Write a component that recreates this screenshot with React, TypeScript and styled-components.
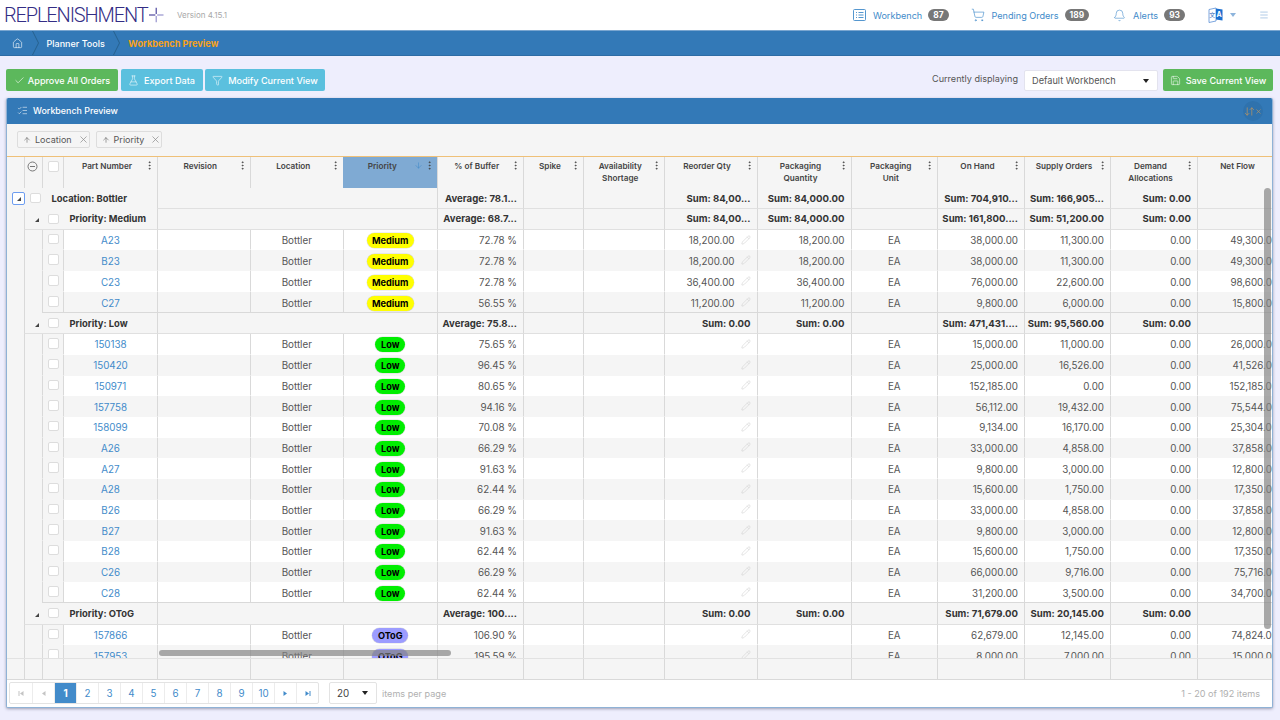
import React from "react";
import styled, { createGlobalStyle, css } from "styled-components";
import {
  Home, Check, Filter, FlaskConical, ListChecks, Save, Pencil, EllipsisVertical, ArrowDownUp, ArrowDown, ArrowUp, X,
  ShoppingCart, Bell, Menu,
} from "lucide-react";

const Global = createGlobalStyle`
  html, body { margin: 0; padding: 0; height: 720px; overflow: hidden; background: #eeeefd; }
  body { font-family: Inter, "Liberation Sans", sans-serif; font-size: 9.8px; color: #4a4a4a; }
  * { box-sizing: border-box; }
`;

const LINE = "#d9d9d9";
const BLUE = "#3379b7";
const LINK = "#428bca";
const template = "17px 18px 21px 94px 92.5px 93.5px 93.5px 86.5px 60px 80.5px 93px 94px 86.5px 87px 86px 87px 87px";

const Page = styled.div`
  width: 1280px;
  height: 720px;
  display: flex;
  flex-direction: column;
`;
const TopBar = styled.header`
  height: 30px;
  background: #fff;
  display: flex;
  align-items: center;
  padding: 0 11px 0 4px;
`;
const Logo = styled.div`
  width: 160px;
  display: flex;
  align-items: center;
  gap: 2px;
  color: #332d85;
`;
const LogoText = styled.span`
  font-family: Roboto, sans-serif;
  font-weight: 300;
  font-size: 20px;
  letter-spacing: -1.15px;
  line-height: 30px;
`;
const Version = styled.span`
  margin-left: 13px;
  color: #a8a8a8;
  font-size: 8px;
`;
const Spacer = styled.div`
  flex: 1;
`;
const NavItem = styled.div<{ $gap: number }>`
  display: flex;
  align-items: center;
  color: ${LINK};
  font-size: 9.1px;
  margin-right: ${(p) => p.$gap}px;
  svg { flex: none; }
`;
const NavLabel = styled.span`
  margin: 0 6px 0 7px;
`;
const Badge = styled.span`
  background: #777;
  color: #fff;
  font-weight: 700;
  font-size: 8.4px;
  line-height: 12px;
  border-radius: 7px;
  padding: 0 5px;
`;
const Caret = styled.span`
  margin: 0 23px 0 6px;
  width: 0;
  height: 0;
  border-left: 3px solid transparent;
  border-right: 3px solid transparent;
  border-top: 4px solid #8db4dc;
`;
const Crumbs = styled.nav`
  height: 26px;
  background: ${BLUE};
  border-top: 1px solid #7aa6d0;
  border-bottom: 1px solid #2d6ca5;
  display: flex;
  align-items: center;
  padding-left: 12px;
  color: #fff;
  font-size: 9px;
  font-weight: 500;
`;
const CrumbSep = styled.svg`
  margin: 0 8px 0 8.5px;
  flex: none;
`;
const CrumbCurrent = styled.span`
  color: #f7a11a;
  font-size: 9.2px;
  font-weight: 700;
`;
const Toolbar = styled.div`
  height: 42px;
  padding: 13px 7px 0 6px;
  display: flex;
  align-items: flex-start;
`;
const Btn = styled.button<{ $kind: "green" | "cyan"; $w: number; $gap?: number }>`
  width: ${(p) => p.$w}px;
  height: 22px;
  border: 0;
  border-radius: 2px;
  padding: 0;
  color: #fff;
  font: 500 9.1px Inter, sans-serif;
  display: flex;
  align-items: center;
  justify-content: center;
  gap: ${(p) => p.$gap ?? 5}px;
  background: ${(p) => (p.$kind === "green" ? "#5cb85c" : "#5bc0de")};
  & + & { margin-left: 2.5px; }
`;
const ShowLabel = styled.span`
  margin: 4px 6px 0 0;
  font-size: 9.1px;
  color: #555;
`;
const Select = styled.div`
  width: 134px;
  height: 21px;
  margin: 1px 5px 0 0;
  background: #fff;
  border: 1px solid #e3e3ee;
  border-radius: 2px;
  display: flex;
  align-items: center;
  justify-content: space-between;
  padding: 0 8px 0 7px;
  font-size: 9.2px;
  color: #555;
`;
const SelCaret = styled.span`
  width: 0;
  height: 0;
  border-left: 3px solid transparent;
  border-right: 3px solid transparent;
  border-top: 4px solid #222;
`;
const Panel = styled.section`
  height: 610px;
  margin: 0 7px 0 6px;
  background: #f5f5f5;
  border: 1px solid #8fb2d6;
  border-top: 0;
  border-radius: 2px;
  box-shadow: 0 1px 3px rgba(60, 60, 90, 0.45);
  display: flex;
  flex-direction: column;
  position: relative;
  overflow: hidden;
`;
const PanelHead = styled.div`
  height: 26px;
  flex: none;
  background: ${BLUE};
  color: #fff;
  display: flex;
  align-items: center;
  padding: 0 9px 1px 10px;
  gap: 5px;
  font-size: 8.9px;
  font-weight: 500;
`;
const SortClear = styled.div`
  width: 20px;
  height: 20px;
  border-radius: 50%;
  background: #2f72ad;
  color: #c9995a;
  display: flex;
  align-items: center;
  justify-content: center;
  padding-top: 1px;
`;
const Chips = styled.div`
  height: 33px;
  flex: none;
  display: flex;
  align-items: center;
  padding: 0 0 1px 10px;
  gap: 6px;
  border-bottom: 1.5px solid #efc078;
`;
const Chip = styled.div`
  height: 17.5px;
  border: 1px solid #ddd;
  border-radius: 2px;
  padding: 0 0 0 5px;
  display: flex;
  align-items: center;
  color: #555;
  font-size: 9px;
  gap: 4px;
  & > svg:last-child { margin-left: 2px; }
`;
const HeadRow = styled.div`
  height: 31px;
  flex: none;
  display: grid;
  grid-template-columns: ${template};
`;
const HeadCell = styled.div<{ $on?: boolean; $line?: boolean }>`
  position: relative;
  padding: 4px ${(p) => (p.$on ? 18 : 9)}px 0 2px;
  text-align: center;
  font-size: 8.2px;
  font-weight: 600;
  line-height: 11.5px;
  color: #444;
  white-space: pre-line;
  ${(p) => p.$line !== false && css`border-left: 1px solid ${LINE};`}
  ${(p) => p.$on && css`background: #7faad3; border-left-color: #7faad3;`}
`;
const TickCell = styled(HeadCell)`
  padding: 4px 0 0 5px;
`;
const Kebab = styled.span`
  position: absolute;
  right: 2px;
  top: 3px;
  color: #444;
  display: flex;
`;
const SortArrow = styled.span`
  position: absolute;
  right: 14px;
  top: 4px;
  color: ${LINK};
  display: flex;
`;
const Body = styled.div`
  height: 469.5px;
  flex: none;
  overflow: hidden;
`;
const Row = styled.div<{ $alt?: boolean; $last?: boolean; $h: number }>`
  height: ${(p) => p.$h}px;
  display: grid;
  grid-template-columns: ${template};
  --row: ${(p) => (p.$alt ? "#f5f5f5" : "#fff")};
  --bb: ${(p) => (p.$last ? LINE : "transparent")};
`;
const Cell = styled.div<{ $align?: string }>`
  border-left: 1px solid ${LINE};
  border-bottom: 1px solid var(--bb);
  background: var(--row);
  padding: 2px 6px 0;
  display: flex;
  align-items: center;
  overflow: hidden;
  white-space: nowrap;
  min-width: 0;
  color: #555;
  justify-content: ${(p) => p.$align || "flex-end"};
`;
const Blank = styled.div`
  grid-column: span 1;
`;
const Gutter = styled.div`
  border-left: 1px solid ${LINE};
`;
const BoxCell = styled.div`
  border-left: 1px solid ${LINE};
  border-bottom: 1px solid var(--bb);
  padding: 4px 0 0 5px;
`;
const Box = styled.span`
  display: block;
  width: 10.5px;
  height: 10.5px;
  background: #fff;
  border: 1px solid #ddd;
  border-radius: 2px;
  flex: none;
`;
const GroupBox = styled(Box)<{ $level: number }>`
  margin-left: ${(p) => (p.$level === 0 ? 5 : 6)}px;
`;
const PartLink = styled.span`
  color: ${LINK};
`;
const PencilMark = styled.span`
  color: #cfcfcf;
  margin-left: 6px;
  margin-top: -2px;
  display: flex;
`;
const Pill = styled.span<{ $p: string }>`
  font-size: 9.2px;
  font-weight: 700;
  color: #000;
  line-height: 15px;
  padding: 0 5.5px;
  border-radius: 8px;
  background: ${(p) => (p.$p === "Medium" ? "#ffff00" : p.$p === "Low" ? "#00ee00" : "#9c9cff")};
  box-shadow: 0 0 0 0.5px rgba(0, 0, 0, 0.12);
`;
const GroupLabel = styled.div<{ $level: number }>`
  grid-column: span ${(p) => (p.$level === 0 ? 4 : 3)};
  display: flex;
  align-items: center;
  font-size: 9.4px;
  font-weight: 700;
  color: #333;
  border-bottom: 1.5px solid #e0e0e0;
  ${(p) =>
    p.$level === 0
      ? css`padding-left: 5px; border-bottom-color: transparent;`
      : css`padding-left: 4px; border-left: 1px solid ${LINE};`}
`;
const Expander = styled.span<{ $focus?: boolean }>`
  width: 13px;
  height: 13px;
  flex: none;
  position: relative;
  ${(p) => p.$focus && css`border: 1.5px solid #6d9df0; border-radius: 2px; background: #fff;`}
  &::after {
    content: "";
    position: absolute;
    right: 3px;
    bottom: 3px;
    border-left: 4px solid transparent;
    border-bottom: 4px solid #444;
  }
`;
const GroupName = styled.span`
  margin-left: 11px;
`;
const GroupEmpty = styled.div`
  grid-column: span 3;
  border-left: 1px solid ${LINE};
  border-bottom: 1.5px solid #e0e0e0;
`;
const Sum = styled.div`
  border-left: 1px solid ${LINE};
  border-bottom: 1.5px solid #e0e0e0;
  padding: 0 6px 0 0;
  display: flex;
  align-items: center;
  justify-content: flex-end;
  font-size: 9.6px;
  font-weight: 700;
  color: #333;
  white-space: nowrap;
  overflow: hidden;
`;
const Foot = styled.div`
  height: 22px;
  flex: none;
  display: grid;
  grid-template-columns: ${template};
  border-top: 1.5px solid #e2e2e2;
  border-bottom: 1px solid ${LINE};
`;
const Pager = styled.div`
  flex: 1;
  background: #fff;
  display: flex;
  align-items: center;
  padding: 0 12px 0 2px;
`;
const PageGroup = styled.div`
  display: flex;
  border: 1px solid #e3e3e3;
  border-radius: 2px;
  height: 22px;
`;
const PageCell = styled.span<{ $on?: boolean; $off?: boolean }>`
  width: 22px;
  display: flex;
  align-items: center;
  justify-content: center;
  color: ${(p) => (p.$on ? "#fff" : p.$off ? "#c4c4c4" : LINK)};
  background: ${(p) => (p.$on ? "#428bca" : "transparent")};
  font-weight: ${(p) => (p.$on ? 700 : 400)};
  & + & { border-left: 1px solid #ececec; }
`;
const PageSel = styled.div`
  margin-left: 10px;
  width: 48px;
  height: 22px;
  border: 1px solid #e3e3e3;
  border-radius: 2px;
  display: flex;
  align-items: center;
  justify-content: space-between;
  padding: 0 8px 0 7px;
  color: #444;
`;
const Muted = styled.span`
  color: #b0b0b0;
  font-size: 9.1px;
  margin-left: 5px;
`;
const VBar = styled.div`
  position: absolute;
  right: 1px;
  top: 90px;
  width: 7px;
  height: 441px;
  background: rgba(130, 130, 130, 0.68);
  border-radius: 4px;
`;
const HBar = styled.div`
  position: absolute;
  left: 152px;
  top: 552px;
  width: 292px;
  height: 6px;
  background: rgba(130, 130, 130, 0.68);
  border-radius: 3px;
`;

const heads = [
  "Part Number", "Revision", "Location", "Priority", "% of Buffer", "Spike", "Availability\nShortage", "Reorder Qty",
  "Packaging\nQuantity", "Packaging\nUnit", "On Hand", "Supply Orders", "Demand\nAllocations", "Net Flow",
];

type D = [string, string, string, string, string, string, string, string];
const medium: D[] = [
  ["A23", "72.78", "18,200.00", "18,200.00", "38,000.00", "11,300.00", "49,300.00", "Medium"],
  ["B23", "72.78", "18,200.00", "18,200.00", "38,000.00", "11,300.00", "49,300.00", "Medium"],
  ["C23", "72.78", "36,400.00", "36,400.00", "76,000.00", "22,600.00", "98,600.00", "Medium"],
  ["C27", "56.55", "11,200.00", "11,200.00", "9,800.00", "6,000.00", "15,800.00", "Medium"],
];
const low: D[] = ([
  ["150138", "75.65", "15,000.00", "11,000.00", "26,000.00"],
  ["150420", "96.45", "25,000.00", "16,526.00", "41,526.00"],
  ["150971", "80.65", "152,185.00", "0.00", "152,185.00"],
  ["157758", "94.16", "56,112.00", "19,432.00", "75,544.00"],
  ["158099", "70.08", "9,134.00", "16,170.00", "25,304.00"],
  ["A26", "66.29", "33,000.00", "4,858.00", "37,858.00"],
  ["A27", "91.63", "9,800.00", "3,000.00", "12,800.00"],
  ["A28", "62.44", "15,600.00", "1,750.00", "17,350.00"],
  ["B26", "66.29", "33,000.00", "4,858.00", "37,858.00"],
  ["B27", "91.63", "9,800.00", "3,000.00", "12,800.00"],
  ["B28", "62.44", "15,600.00", "1,750.00", "17,350.00"],
  ["C26", "66.29", "66,000.00", "9,716.00", "75,716.00"],
  ["C28", "62.44", "31,200.00", "3,500.00", "34,700.00"],
] as string[][]).map((r) => [r[0], r[1], "", "", r[2], r[3], r[4], "Low"] as D);
const otog: D[] = [
  ["157866", "106.90", "", "", "62,679.00", "12,145.00", "74,824.00", "OToG"],
  ["157953", "195.59", "", "", "8,000.00", "7,000.00", "15,000.00", "OToG"],
];

function DataRow({ d, alt, last, h }: { d: D; alt: boolean; last?: boolean; h: number }) {
  return (
    <Row $alt={alt} $last={last} $h={h}>
      <Blank />
      <Gutter />
      <BoxCell><Box /></BoxCell>
      <Cell $align="center"><PartLink>{d[0]}</PartLink></Cell>
      <Cell />
      <Cell $align="center">Bottler</Cell>
      <Cell $align="center"><Pill $p={d[7]}>{d[7]}</Pill></Cell>
      <Cell>{d[1]} %</Cell>
      <Cell />
      <Cell />
      <Cell>
        {d[2]}
        <PencilMark><Pencil size={10} strokeWidth={1.3} /></PencilMark>
      </Cell>
      <Cell>{d[3]}</Cell>
      <Cell $align="center">EA</Cell>
      <Cell>{d[4]}</Cell>
      <Cell>{d[5]}</Cell>
      <Cell>0.00</Cell>
      <Cell>{d[6]}</Cell>
    </Row>
  );
}

function GroupRow(props: {
  name: string; level: number; h: number; avg: string; qty: string; pk: string; hand: string; sup: string;
}) {
  const { name, level, h, avg, qty, pk, hand, sup } = props;
  return (
    <Row $h={h}>
      {level === 1 && <Blank />}
      <GroupLabel $level={level}>
        <Expander $focus={level === 0} />
        <GroupBox $level={level} />
        <GroupName>{name}</GroupName>
      </GroupLabel>
      <GroupEmpty />
      <Sum>{avg}</Sum>
      <Sum />
      <Sum />
      <Sum>{qty}</Sum>
      <Sum>{pk}</Sum>
      <Sum />
      <Sum>{hand}</Sum>
      <Sum>{sup}</Sum>
      <Sum>Sum: 0.00</Sum>
      <Sum />
    </Row>
  );
}

const WorkbenchIcon = () => (
  <svg width="13" height="12" viewBox="0 0 13 12" fill="none" stroke={LINK} strokeWidth="0.9">
    <rect x="0.5" y="0.5" width="12" height="11" rx="1" />
    <path d="M3 3.5h1M3 6h1M3 8.5h1M5.5 3.5h5M5.5 6h5M5.5 8.5h5" />
  </svg>
);
const LanguageIcon = () => (
  <svg width="16" height="16" viewBox="0 0 16 16">
    <path d="M1 2.5 8 1v13L1 15.5z" fill="#fff" stroke="#5b8fd6" strokeWidth="0.8" />
    <path d="M8 1.5l6.5 1v11L8 12.5z" fill="#1a6fd0" />
    <text x="4.3" y="9.5" fontSize="6" textAnchor="middle" fill="#2a66b8" fontFamily="Noto Sans CJK SC, sans-serif">文</text>
    <text x="11.2" y="10" fontSize="7" fontWeight="700" textAnchor="middle" fill="#fff" fontFamily="Inter, sans-serif">A</text>
  </svg>
);
const Chevron = () => (
  <CrumbSep width="7" height="24" viewBox="0 0 7 24" fill="none" stroke="#27618f" strokeWidth="1">
    <path d="M0.5 0 6.5 12 0.5 24" />
  </CrumbSep>
);
const Tri = ({ dir, bar }: { dir: "l" | "r"; bar?: boolean }) => (
  <svg width="7" height="7" viewBox="0 0 7 7" fill="currentColor">
    {dir === "l" ? <path d="M5.5 1v5L2 3.5z" /> : <path d="M1.5 1v5L5 3.5z" />}
    {bar && (dir === "l" ? <rect x="0.5" y="1" width="1" height="5" /> : <rect x="5.5" y="1" width="1" height="5" />)}
  </svg>
);

export default function App() {
  return (
    <Page>
      <Global />
      <TopBar>
        <Logo>
          <LogoText>REPLENISHMENT</LogoText>
          <svg width="16" height="16" viewBox="0 0 16 16" fill="none" strokeWidth="1.6">
            <path d="M0 8h7" stroke="#6d68b0" />
            <path d="M9 8h7" stroke="#a9a6d6" />
            <path d="M8 0v7" stroke="#6d68b0" />
            <path d="M8 9v7" stroke="#a9a6d6" />
          </svg>
        </Logo>
        <Version>Version 4.15.1</Version>
        <Spacer />
        <NavItem $gap={22}><WorkbenchIcon /><NavLabel>Workbench</NavLabel><Badge>87</Badge></NavItem>
        <NavItem $gap={24}><ShoppingCart size={14} strokeWidth={1.1} /><NavLabel>Pending Orders</NavLabel><Badge>189</Badge></NavItem>
        <NavItem $gap={23}><Bell size={13} strokeWidth={1.1} /><NavLabel>Alerts</NavLabel><Badge>93</Badge></NavItem>
        <LanguageIcon />
        <Caret />
        <Menu size={10} color="#8db4dc" strokeWidth={1.6} />
      </TopBar>
      <Crumbs>
        <Home size={11} strokeWidth={1.3} />
        <Chevron />
        <span>Planner Tools</span>
        <Chevron />
        <CrumbCurrent>Workbench Preview</CrumbCurrent>
      </Crumbs>
      <Toolbar>
        <Btn $kind="green" $w={112} $gap={3}><Check size={11} strokeWidth={1.3} />Approve All Orders</Btn>
        <Btn $kind="cyan" $w={82}><FlaskConical size={11} strokeWidth={1.2} />Export Data</Btn>
        <Btn $kind="cyan" $w={120}><Filter size={11} strokeWidth={1.2} />Modify Current View</Btn>
        <Spacer />
        <ShowLabel>Currently displaying</ShowLabel>
        <Select>Default Workbench<SelCaret /></Select>
        <Btn $kind="green" $w={110}><Save size={11} strokeWidth={1.2} />Save Current View</Btn>
      </Toolbar>
      <Panel>
        <PanelHead>
          <ListChecks size={11} strokeWidth={1.2} />
          <span>Workbench Preview</span>
          <Spacer />
          <SortClear>
            <ArrowDownUp size={11} strokeWidth={1.4} />
            <X size={7} strokeWidth={2} />
          </SortClear>
        </PanelHead>
        <Chips>
          <Chip><ArrowUp size={8} strokeWidth={1.6} />Location<X size={11} strokeWidth={1.5} color="#888" /></Chip>
          <Chip><ArrowUp size={8} strokeWidth={1.6} />Priority<X size={11} strokeWidth={1.5} color="#888" /></Chip>
        </Chips>
        <HeadRow>
          <HeadCell $line={false} />
          <HeadCell>
            <svg width="11" height="11" viewBox="0 0 11 11" fill="none" stroke="#777">
              <circle cx="5.5" cy="5.5" r="4.5" />
              <path d="M3 5.5h5" />
            </svg>
          </HeadCell>
          <TickCell><Box /></TickCell>
          {heads.map((h) => (
            <HeadCell key={h} $on={h === "Priority"}>
              {h}
              {h === "Priority" && <SortArrow><ArrowDown size={9} strokeWidth={1.5} /></SortArrow>}
              {h !== "Net Flow" && <Kebab><EllipsisVertical size={11} strokeWidth={1.8} /></Kebab>}
            </HeadCell>
          ))}
        </HeadRow>
        <Body>
          <GroupRow h={21} name="Location: Bottler" level={0} avg="Average: 78.1..." qty="Sum: 84,00..." pk="Sum: 84,000.00" hand="Sum: 704,910..." sup="Sum: 166,905..." />
          <GroupRow h={20.6} name="Priority: Medium" level={1} avg="Average: 68.7..." qty="Sum: 84,00..." pk="Sum: 84,000.00" hand="Sum: 161,800...." sup="Sum: 51,200.00" />
          {medium.map((d, i) => <DataRow key={d[0]} h={20.9} d={d} alt={i % 2 === 1} last={i === medium.length - 1} />)}
          <GroupRow h={21} name="Priority: Low" level={1} avg="Average: 75.8..." qty="Sum: 0.00" pk="Sum: 0.00" hand="Sum: 471,431...." sup="Sum: 95,560.00" />
          {low.map((d, i) => <DataRow key={d[0]} h={20.68} d={d} alt={i % 2 === 1} last={i === low.length - 1} />)}
          <GroupRow h={21.7} name="Priority: OToG" level={1} avg="Average: 100...." qty="Sum: 0.00" pk="Sum: 0.00" hand="Sum: 71,679.00" sup="Sum: 20,145.00" />
          {otog.map((d, i) => <DataRow key={d[0]} h={20.68} d={d} alt={i % 2 === 1} />)}
        </Body>
        <Foot>
          <Blank />
          {heads.concat("", "").map((_, i) => <Gutter key={i} />)}
        </Foot>
        <Pager>
          <PageGroup>
            <PageCell $off><Tri dir="l" bar /></PageCell>
            <PageCell $off><Tri dir="l" /></PageCell>
            {[1, 2, 3, 4, 5, 6, 7, 8, 9, 10].map((n) => <PageCell key={n} $on={n === 1}>{n}</PageCell>)}
            <PageCell><Tri dir="r" /></PageCell>
            <PageCell><Tri dir="r" bar /></PageCell>
          </PageGroup>
          <PageSel>20<SelCaret /></PageSel>
          <Muted>items per page</Muted>
          <Spacer />
          <Muted>1 - 20 of 192 items</Muted>
        </Pager>
        <VBar />
        <HBar />
      </Panel>
    </Page>
  );
}
